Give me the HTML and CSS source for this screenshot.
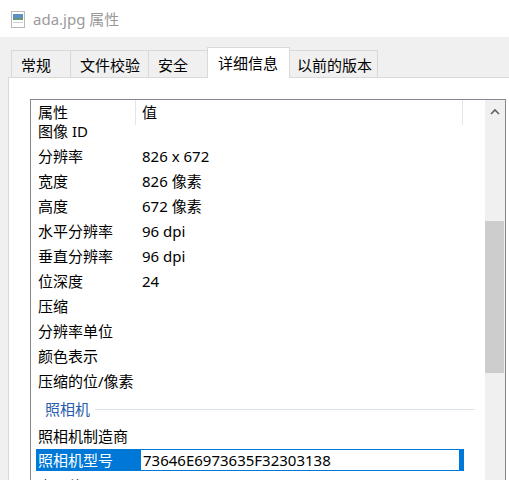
FILE: index.html
```html
<!DOCTYPE html>
<html lang="zh-CN">
<head>
<meta charset="utf-8">
<title>ada.jpg 属性</title>
<link rel="stylesheet" href="styles.css">
</head>
<body>
<div class="window">
  <div class="titlebar">
    <svg class="ficon" width="14" height="17" viewBox="0 0 14 17">
      <rect x="0.5" y="0.5" width="13" height="16" fill="#ffffff" stroke="#b9b9b9"/>
      <rect x="2" y="3" width="10" height="6" fill="#5d8fc4"/>
      <path d="M2 9 L5 6.5 L8 8.5 L12 6 L12 9 Z" fill="#6a9a5a"/>
      <rect x="2" y="11" width="10" height="1" fill="#d0d0d0"/>
    </svg>
    <span class="title">ada.jpg 属性</span>
  </div>
  <div class="tabs">
    <div class="tab w1">常规</div>
    <div class="tab w2">文件校验</div>
    <div class="tab w3">安全</div>
    <div class="tab active">详细信息</div>
    <div class="tab w5 last">以前的版本</div>
  </div>
  <div class="panel">
    <div class="box">
      <div class="list">
        <div class="header">
          <div class="hc hc1">属性</div>
          <div class="hc hc2">值</div>
        </div>
        <div class="row"><div class="c1">图像 ID</div><div class="c2"></div></div>
        <div class="row"><div class="c1">分辨率</div><div class="c2">826 x 672</div></div>
        <div class="row"><div class="c1">宽度</div><div class="c2">826 像素</div></div>
        <div class="row"><div class="c1">高度</div><div class="c2">672 像素</div></div>
        <div class="row"><div class="c1">水平分辨率</div><div class="c2">96 dpi</div></div>
        <div class="row"><div class="c1">垂直分辨率</div><div class="c2">96 dpi</div></div>
        <div class="row"><div class="c1">位深度</div><div class="c2">24</div></div>
        <div class="row"><div class="c1">压缩</div><div class="c2"></div></div>
        <div class="row"><div class="c1">分辨率单位</div><div class="c2"></div></div>
        <div class="row"><div class="c1">颜色表示</div><div class="c2"></div></div>
        <div class="row"><div class="c1">压缩的位/像素</div><div class="c2"></div></div>
        <div class="group"><span class="gtext">照相机</span><span class="gline"></span></div>
        <div class="row"><div class="c1">照相机制造商</div><div class="c2"></div></div>
        <div class="row selrow"><div class="selname">照相机型号</div><div class="edit">73646E6973635F32303138</div></div>
        <div class="row"><div class="c1">光圈值</div><div class="c2"></div></div>
      </div>
      <div class="scrollbar">
        <div class="sb-up">
          <svg width="10" height="7" viewBox="0 0 10 7"><path d="M1 6 L5 2 L9 6" fill="none" stroke="#606060" stroke-width="1.6"/></svg>
        </div>
        <div class="thumb"></div>
      </div>
    </div>
  </div>
</div>
</body>
</html>
```
FILE: styles.css
```css
html, body {
  margin: 0;
  padding: 0;
}
body {
  width: 509px;
  height: 480px;
  overflow: hidden;
  background: #f0f0f0;
  font-family: "Noto Sans", "Noto Sans CJK SC", sans-serif;
  font-size: 15px;
  color: #000;
}
.window {
  display: flex;
  flex-direction: column;
  height: 480px;
}
.titlebar {
  height: 37px;
  flex: none;
  background: #ffffff;
  display: flex;
  align-items: center;
  padding-left: 11px;
  box-sizing: border-box;
}
.ficon {
  display: block;
  margin-right: 8px;
  margin-top: 1px;
}
.title {
  color: #9a9a9a;
  font-size: 15px;
  line-height: 20px;
}
.tabs {
  height: 40px;
  flex: none;
  display: flex;
  align-items: flex-end;
  padding-left: 11px;
  box-sizing: border-box;
  position: relative;
  z-index: 2;
}
.tab {
  height: 27px;
  box-sizing: border-box;
  border-top: 1px solid #d9d9d9;
  border-left: 1px solid #d9d9d9;
  background: #f0f0f0;
  line-height: 24px;
  padding-top: 2px;
  padding-left: 9px;
  white-space: nowrap;
}
.w1 { width: 59px; }
.w2 { width: 78px; }
.w3 { width: 59px; }
.w5 { width: 88px; padding-left: 7px; border-left: none; }
.last { border-right: 1px solid #d9d9d9; }
.tab.active {
  width: 83px;
  height: 31px;
  margin-bottom: -1px;
  background: #ffffff;
  border-right: 1px solid #d9d9d9;
  padding-left: 10px;
  padding-top: 3px;
}
.panel {
  flex: 1;
  margin-left: 8px;
  border-left: 1px solid #d9d9d9;
  border-top: 1px solid #d9d9d9;
  background: #ffffff;
  padding: 21px 0 0 21px;
  min-height: 0;
  overflow: hidden;
}
.box {
  width: 476px;
  height: 420px;
  box-sizing: border-box;
  border: 1px solid #828790;
  display: flex;
  background: #ffffff;
}
.list {
  width: 454px;
  flex: none;
  overflow: hidden;
}
.header {
  height: 19px;
  display: grid;
  grid-template-columns: 105px 327px;
  grid-template-rows: 19px;
  align-items: start;
  position: relative;
  z-index: 1;
}
.hc {
  height: 25px;
  line-height: 25px;
  box-sizing: border-box;
  border-right: 1px solid #e5e5e5;
  white-space: nowrap;
}
.hc1 { padding-left: 7px; }
.hc2 { padding-left: 6px; }
.row {
  height: 25px;
  line-height: 25px;
  display: grid;
  grid-template-columns: 105px 1fr;
  white-space: nowrap;
}
.c1 { padding-left: 7px; }
.c2 { padding-left: 6px; }
.group {
  height: 30px;
  display: flex;
  align-items: center;
  padding-left: 14px;
  padding-right: 10px;
  gap: 5px;
}
.gtext {
  color: #2a5cad;
  line-height: 30px;
}
.gline {
  flex: 1;
  height: 1px;
  background: #dde3ea;
  margin-top: 1px;
}
.selrow {
  display: flex;
  align-items: flex-start;
}
.selname {
  margin-left: 5px;
  width: 104px;
  height: 22px;
  line-height: 22px;
  background: #0078d7;
  color: #ffffff;
  padding-left: 2px;
  box-sizing: border-box;
}
.edit {
  width: 324px;
  height: 22px;
  box-sizing: border-box;
  border: 1px solid #0078d7;
  border-right-width: 5px;
  padding-left: 2px;
  line-height: 20px;
  background: #ffffff;
}
.scrollbar {
  width: 20px;
  flex: none;
  background: #f0f0f0;
  display: flex;
  flex-direction: column;
}
.sb-up {
  height: 22px;
  display: flex;
  align-items: center;
  justify-content: center;
}
.sb-up svg { display: block; margin-left: -1px; }
.thumb {
  margin-top: 99px;
  height: 152px;
  margin-right: 1px;
  background: #cdcdcd;
}
```
